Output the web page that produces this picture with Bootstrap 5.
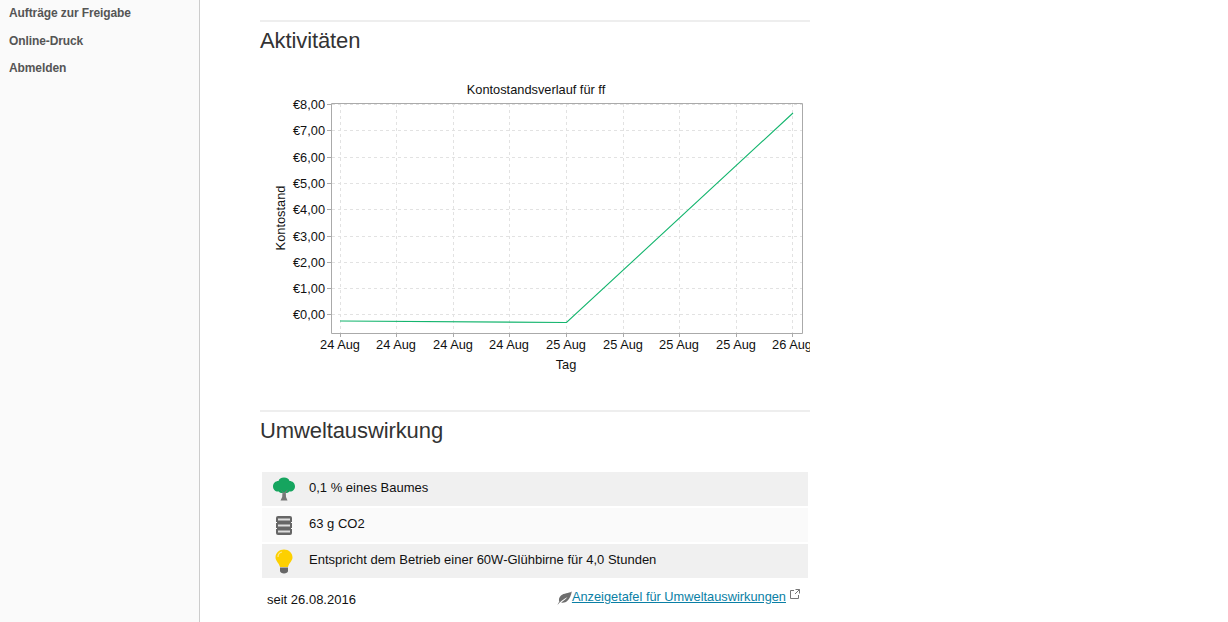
<!DOCTYPE html>
<html lang="de">
<head>
<meta charset="utf-8">
<title>Aktivitäten</title>
<link href="https://cdn.jsdelivr.net/npm/bootstrap@5.3.0/dist/css/bootstrap.min.css" rel="stylesheet">
<style>
html,body{height:622px;overflow:hidden;background:#fff;}
body{font-family:"Liberation Sans",Arial,sans-serif;font-size:12px;color:#111;}
.page-wrap{height:622px;}
.side-col{width:200px;flex:none;background:#fafafa;border-right:1px solid #ccc;padding:6px 9px 0;}
.side-link{display:block;font-size:12px;font-weight:700;color:#555;text-decoration:none;line-height:14px;height:27.5px;letter-spacing:-.1px;}
.main-col{width:550px;margin-left:60px;flex:none;padding-top:20px;}
.sec-rule{height:2px;background:#eee;border:0;margin:0;opacity:1;}
.sec-title{font-family:"Liberation Sans",Arial,sans-serif;font-size:22px;font-weight:400;color:#333;line-height:26px;margin:6px 0 0;letter-spacing:-.1px;}
.chart-svg{display:block;width:550px;height:327px;margin-top:22px;}
.chart-svg text{font-family:"Liberation Sans",Arial,sans-serif;font-size:12.8px;fill:#111;}
.impact-table{width:546px;border-collapse:separate;border-spacing:0 2px;margin:26px 0 0 2px;}
.impact-table td{height:34px;padding:0;vertical-align:middle;}
.impact-table .ico-cell{width:47px;text-align:center;padding-right:3px;}
.impact-table svg{display:block;margin:0 auto;}
.row-a td{background:#f0f0f0;}
.row-b td{background:#fafafa;}
.impact-table td.row-text{font-size:13px;padding-bottom:2px;}
.foot-row{padding:0 10px 0 7px;margin-top:6px;line-height:18px;}
.green-link{color:#0a7fa5;text-decoration:underline;font-size:12.8px;margin-top:2px;}
.foot-text{font-size:13px;padding-top:5px;}
.leaf-ico{margin-top:5px;}
.ext-ico{margin:3px 0 0 4px;}
</style>
</head>
<body>
<div class="d-flex page-wrap">
  <nav class="side-col">
    <a class="side-link" href="#">Aufträge zur Freigabe</a>
    <a class="side-link" href="#">Online-Druck</a>
    <a class="side-link" href="#">Abmelden</a>
  </nav>
  <main class="main-col">
    <hr class="sec-rule">
    <h2 class="sec-title">Aktivitäten</h2>
    <svg class="chart-svg" viewBox="260 76 550 327" xmlns="http://www.w3.org/2000/svg">
      <text x="536" y="94" text-anchor="middle">Kontostandsverlauf für ff</text>
      <g stroke="#e2e2e2" stroke-width="1" stroke-dasharray="3 3" fill="none">
        <path d="M340.500 104V333M396.500 104V333M453.500 104V333M509.500 104V333M566.500 104V333M623.500 104V333M679.500 104V333M736.500 104V333M792.500 104V333"/>
        <path d="M332 104.500H802M332 130.500H802M332 157.500H802M332 183.500H802M332 209.500H802M332 236.500H802M332 262.500H802M332 288.500H802M332 314.500H802"/>
      </g>
      <path d="M331.500 103.500H802.500V333.500H331.500Z" fill="none" stroke="#aaa"/>
      <path d="M327 104.500H332M327 130.500H332M327 157.500H332M327 183.500H332M327 209.500H332M327 236.500H332M327 262.500H332M327 288.500H332M327 314.500H332M340.500 333V337M396.500 333V337M453.500 333V337M509.500 333V337M566.500 333V337M623.500 333V337M679.500 333V337M736.500 333V337M792.500 333V337" stroke="#aaa" fill="none"/>
      <path d="M340 321 L566.500 322.500 L793 113" fill="none" stroke="#14b56e" stroke-width="1.100"/>
      <g text-anchor="end">
        <text x="325" y="109">€8,00</text><text x="325" y="135">€7,00</text><text x="325" y="162">€6,00</text><text x="325" y="188">€5,00</text><text x="325" y="214">€4,00</text><text x="325" y="241">€3,00</text><text x="325" y="267">€2,00</text><text x="325" y="293">€1,00</text><text x="325" y="319">€0,00</text>
      </g>
      <g text-anchor="middle">
        <text x="340" y="349">24 Aug</text><text x="396" y="349">24 Aug</text><text x="453" y="349">24 Aug</text><text x="509" y="349">24 Aug</text><text x="566" y="349">25 Aug</text><text x="623" y="349">25 Aug</text><text x="679" y="349">25 Aug</text><text x="736" y="349">25 Aug</text><text x="792" y="349">26 Aug</text>
        <text x="566" y="369">Tag</text>
        <text transform="translate(285 218) rotate(-90)">Kontostand</text>
      </g>
    </svg>
    <hr class="sec-rule" style="margin-top:7px">
    <h2 class="sec-title">Umweltauswirkung</h2>
    <table class="impact-table">
      <tr class="row-a">
        <td class="ico-cell">
          <svg width="24" height="24" viewBox="0 0 24 24"><path d="M12 .5C9 .5 7 2 6.500 4C3.500 4 1 6.200 1 9.500C1 12.500 3.500 15 6.800 14.500C8 16 10 16.500 12 15.700C14 16.500 16 16 17.200 14.500C20.500 15 23 12.500 23 9.500C23 6.200 20.500 4 17.500 4C17 2 15 .5 12 .5Z" fill="#16a55f"/><path d="M8.500 12.500L10.500 15L10.200 20L8.500 23.500H15.500L14 20L13.800 16L15.800 12.500L12.500 15L12 16.500L11.200 15Z" fill="#777"/></svg>
        </td>
        <td class="row-text">0,1 % eines Baumes</td>
      </tr>
      <tr class="row-b">
        <td class="ico-cell">
          <svg width="18" height="21" viewBox="0 0 18 21"><rect x="1" y="1" width="16" height="19" rx="2" fill="#666"/><g fill="#dedede"><rect x="3" y="3.500" width="12" height="2"/><rect x="3" y="9.500" width="12" height="2"/><rect x="3" y="15.500" width="12" height="2"/></g><g fill="#fafafa"><rect x="1" y="7" width="1" height="1"/><rect x="16" y="7" width="1" height="1"/><rect x="1" y="13" width="1" height="1"/><rect x="16" y="13" width="1" height="1"/></g></svg>
        </td>
        <td class="row-text">63 g CO2</td>
      </tr>
      <tr class="row-a">
        <td class="ico-cell">
          <svg width="18" height="25" viewBox="0 0 18 25"><path d="M9 .5C4.300 .5 .5 4 .5 8.500C.5 12 3.800 13.500 5 18H13C14.200 13.500 17.500 12 17.500 8.500C17.500 4 13.700 .5 9 .5Z" fill="#fdd000"/><path d="M3 8C3 5.500 5 3.500 7 3" fill="none" stroke="#ffe98a" stroke-width="1.200"/><path d="M5 18.500H13V22C13 23.600 11 24.500 9 24.500C7 24.500 5 23.600 5 22Z" fill="#666"/></svg>
        </td>
        <td class="row-text">Entspricht dem Betrieb einer 60W-Glühbirne für 4,0 Stunden</td>
      </tr>
    </table>
    <div class="d-flex justify-content-between align-items-start foot-row">
      <span class="foot-text">seit 26.08.2016</span>
      <span class="d-flex align-items-start">
        <svg class="leaf-ico" width="15" height="14" viewBox="0 0 15 14"><path d="M.5 14C1.500 12.800 3 11 5 9.500C7 8 9 7 10.500 6C8.500 8.500 6.500 9.500 4.200 11.500C7.500 12.500 13 10.500 14.800 .5C11.500 2.500 7 2 4 4.500C2 6.200 1.500 9 2.300 10.800C1.600 11.800 .8 13 .5 14Z" fill="#6e6e6e"/></svg>
        <a class="green-link" href="#">Anzeigetafel für Umweltauswirkungen</a>
        <svg class="ext-ico" width="10" height="10" viewBox="0 0 10 10" fill="none" stroke="#777" stroke-width="1"><path d="M4 1.500H.5V9.500H8.500V6"/><path d="M5.500 .5H9.500V4.500M9.500 .5L5 5"/></svg>
      </span>
    </div>
  </main>
</div>
<script src="https://cdn.jsdelivr.net/npm/bootstrap@5.3.0/dist/js/bootstrap.bundle.min.js"></script>
</body>
</html>
